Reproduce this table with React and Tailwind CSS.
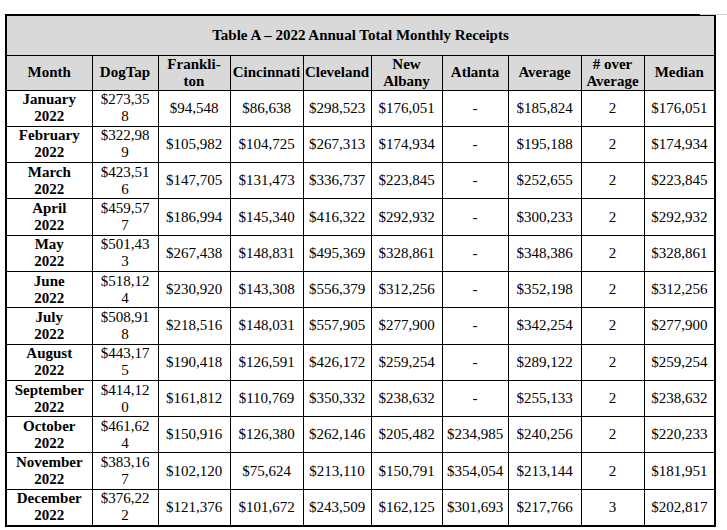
const rows = [
  ["January", "$273,358", "$94,548", "$86,638", "$298,523", "$176,051", "-", "$185,824", "2", "$176,051"],
  ["February", "$322,989", "$105,982", "$104,725", "$267,313", "$174,934", "-", "$195,188", "2", "$174,934"],
  ["March", "$423,516", "$147,705", "$131,473", "$336,737", "$223,845", "-", "$252,655", "2", "$223,845"],
  ["April", "$459,577", "$186,994", "$145,340", "$416,322", "$292,932", "-", "$300,233", "2", "$292,932"],
  ["May", "$501,433", "$267,438", "$148,831", "$495,369", "$328,861", "-", "$348,386", "2", "$328,861"],
  ["June", "$518,124", "$230,920", "$143,308", "$556,379", "$312,256", "-", "$352,198", "2", "$312,256"],
  ["July", "$508,918", "$218,516", "$148,031", "$557,905", "$277,900", "-", "$342,254", "2", "$277,900"],
  ["August", "$443,175", "$190,418", "$126,591", "$426,172", "$259,254", "-", "$289,122", "2", "$259,254"],
  ["September", "$414,120", "$161,812", "$110,769", "$350,332", "$238,632", "-", "$255,133", "2", "$238,632"],
  ["October", "$461,624", "$150,916", "$126,380", "$262,146", "$205,482", "$234,985", "$240,256", "2", "$220,233"],
  ["November", "$383,167", "$102,120", "$75,624", "$213,110", "$150,791", "$354,054", "$213,144", "2", "$181,951"],
  ["December", "$376,222", "$121,376", "$101,672", "$243,509", "$162,125", "$301,693", "$217,766", "3", "$202,817"],
];

const cell = "border border-black text-center align-middle p-0";

export default function App() {
  return (
    <div className="w-[727px] h-[530px] bg-white text-black font-['Liberation_Serif',serif] text-[15px] leading-[17px] pt-[14px] pl-[5px] relative">
      <div className="absolute top-[14px] left-[700px] w-[27px] h-px bg-[#cfcfcf]" />
      <table className="table-fixed border-collapse border-2 border-black w-[709px]">
        <colgroup>
          <col className="w-[86px]" />
          <col className="w-[66px]" />
          <col className="w-[72px]" />
          <col className="w-[73px]" />
          <col className="w-[68px]" />
          <col className="w-[71px]" />
          <col className="w-[66px]" />
          <col className="w-[73px]" />
          <col className="w-[63px]" />
          <col className="w-[71px]" />
        </colgroup>
        <thead>
          <tr className="bg-[#d9d9d9] h-[40px]">
            <th colSpan={10} className={`${cell} font-bold`}>
              Table A – 2022 Annual Total Monthly Receipts
            </th>
          </tr>
          <tr className="bg-[#d9d9d9] h-[35px] font-bold">
            <th className={cell}>Month</th>
            <th className={cell}>DogTap</th>
            <th className={cell}>Frankli-<br />ton</th>
            <th className={cell}>Cincinnati</th>
            <th className={cell}>Cleveland</th>
            <th className={cell}>New<br />Albany</th>
            <th className={cell}>Atlanta</th>
            <th className={cell}>Average</th>
            <th className={cell}># over<br />Average</th>
            <th className={cell}>Median</th>
          </tr>
        </thead>
        <tbody>
          {rows.map((r) => (
            <tr key={r[0]} className="h-[36.3px]">
              <td className={`${cell} font-bold`}>
                {r[0]}
                <br />
                2022
              </td>
              <td className={cell}>
                {r[1].slice(0, 7)}
                <br />
                {r[1].slice(7)}
              </td>
              {r.slice(2).map((v, i) => (
                <td key={i} className={cell}>
                  {v}
                </td>
              ))}
            </tr>
          ))}
        </tbody>
      </table>
    </div>
  );
}
